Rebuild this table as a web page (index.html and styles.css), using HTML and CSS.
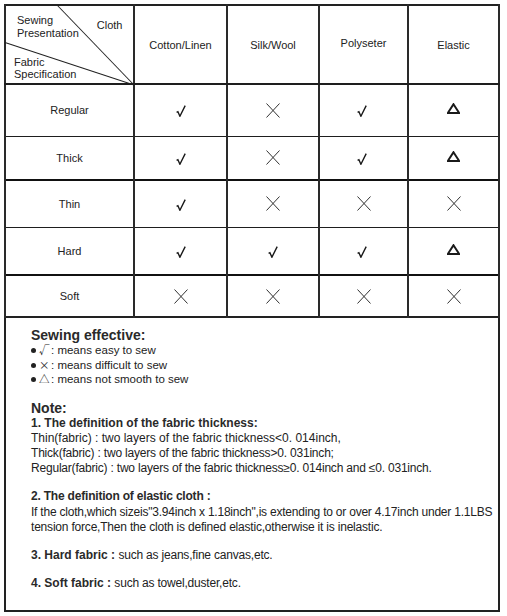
FILE: index.html
```html
<!DOCTYPE html>
<html lang="en">
<head>
<meta charset="utf-8">
<title>Sewing effective chart</title>
<link rel="stylesheet" href="styles.css">
</head>
<body>
<svg class="defs" width="0" height="0" aria-hidden="true">
  <symbol id="check" viewBox="0 0 10 12">
    <path d="M0.6 7.4 L1.9 6.7 L3.9 11.2 L9.2 0.6" fill="none" stroke="#1a1a1a" stroke-width="1.4" stroke-linejoin="miter"/>
  </symbol>
  <symbol id="cross" viewBox="0 0 14 15">
    <path d="M0.5 0.5 L13.5 14.5 M13.5 0.5 L0.5 14.5" fill="none" stroke="#333" stroke-width="1"/>
  </symbol>
  <symbol id="tri" viewBox="0 0 13 11">
    <path d="M6.5 1.2 L12.2 10 L0.8 10 Z" fill="none" stroke="#1a1a1a" stroke-width="2" stroke-linejoin="miter"/>
  </symbol>
</svg>

<div class="sheet">
  <table class="chart">
    <colgroup>
      <col class="c-spec"><col class="c-cotton"><col class="c-silk"><col class="c-poly"><col class="c-elastic">
    </colgroup>
    <thead>
      <tr class="head">
        <th class="corner">
          <div class="corner-box">
            <svg class="diag" viewBox="0 0 129 79" preserveAspectRatio="none" aria-hidden="true">
              <line x1="52" y1="0" x2="129" y2="79"/>
              <line x1="0" y1="37" x2="129" y2="79"/>
            </svg>
            <div class="corner-top">
              <span class="sew">Sewing<br>Presentation</span>
              <span class="cloth">Cloth</span>
            </div>
            <div class="fab">Fabric<br>Specification</div>
          </div>
        </th>
        <th>Cotton/Linen</th>
        <th>Silk/Wool</th>
        <th class="poly">Polyseter</th>
        <th>Elastic</th>
      </tr>
    </thead>
    <tbody>
      <tr class="r-regular">
        <th>Regular</th>
        <td><svg class="ic ck"><use href="#check"/></svg></td>
        <td><svg class="ic x"><use href="#cross"/></svg></td>
        <td class="poly"><svg class="ic ck"><use href="#check"/></svg></td>
        <td><svg class="ic tr"><use href="#tri"/></svg></td>
      </tr>
      <tr class="r-thick">
        <th>Thick</th>
        <td><svg class="ic ck"><use href="#check"/></svg></td>
        <td><svg class="ic x"><use href="#cross"/></svg></td>
        <td class="poly"><svg class="ic ck"><use href="#check"/></svg></td>
        <td><svg class="ic tr"><use href="#tri"/></svg></td>
      </tr>
      <tr class="r-thin heavy">
        <th>Thin</th>
        <td><svg class="ic ck"><use href="#check"/></svg></td>
        <td><svg class="ic x"><use href="#cross"/></svg></td>
        <td><svg class="ic x"><use href="#cross"/></svg></td>
        <td><svg class="ic x"><use href="#cross"/></svg></td>
      </tr>
      <tr class="r-hard">
        <th>Hard</th>
        <td><svg class="ic ck"><use href="#check"/></svg></td>
        <td><svg class="ic ck"><use href="#check"/></svg></td>
        <td class="poly"><svg class="ic ck"><use href="#check"/></svg></td>
        <td><svg class="ic tr"><use href="#tri"/></svg></td>
      </tr>
      <tr class="r-soft heavy">
        <th>Soft</th>
        <td><svg class="ic x"><use href="#cross"/></svg></td>
        <td><svg class="ic x"><use href="#cross"/></svg></td>
        <td><svg class="ic x"><use href="#cross"/></svg></td>
        <td><svg class="ic x"><use href="#cross"/></svg></td>
      </tr>
    </tbody>
  </table>

  <div class="notes">
    <h2 class="title">Sewing effective:</h2>
    <ul class="legend">
      <li><span class="dot"></span><span class="sym">√</span>: means easy to sew</li>
      <li><span class="dot"></span><span class="sym">×</span>: means difficult to sew</li>
      <li><span class="dot"></span><span class="sym">△</span>: means not smooth to sew</li>
    </ul>
    <h2 class="title note-title">Note:</h2>
    <p class="para"><b>1. The definition of the fabric thickness:</b><br>
      Thin(fabric) : two layers of the fabric thickness&lt;0. 014inch,<br>
      <span class="snug">Thick(fabric) : two layers of the fabric thickness&gt;0. 031inch;</span><br>
      <span class="snug">Regular(fabric) : two layers of the fabric thickness≥0. 014inch and ≤0. 031inch.</span></p>
    <p class="para gap"><b class="snug">2. The definition of elastic cloth :</b><br>
      <span class="tight">If the cloth,which sizeis"3.94inch x 1.18inch",is extending to or over 4.17inch under 1.1LBS</span><br>
      <span class="snug">tension force,Then the cloth is defined elastic,otherwise it is inelastic.</span></p>
    <p class="para gap"><b>3. Hard fabric :</b> <span class="snug">such as jeans,fine canvas,etc.</span></p>
    <p class="para gap"><b>4. Soft fabric :</b> <span class="snug">such as towel,duster,etc.</span></p>
  </div>
</div>
</body>
</html>
```

FILE: styles.css
```css
html, body {
  margin: 0;
  padding: 0;
  background: #fff;
}

body {
  font-family: "Liberation Sans", Arial, sans-serif;
  color: #222;
}

.defs {
  position: absolute;
  width: 0;
  height: 0;
  overflow: hidden;
}

.sheet {
  padding: 4px 0 0 4px;
  width: 496px;
}

/* ---------- table ---------- */
.chart {
  border-collapse: collapse;
  table-layout: fixed;
  width: 496px;
  border: 2px solid #222;
}

.c-spec { width: 129px; }
.c-cotton { width: 93px; }
.c-silk { width: 92px; }
.c-poly { width: 89px; }
.c-elastic { width: 91px; }

.chart th,
.chart td {
  padding: 0;
  text-align: center;
  vertical-align: middle;
  font-size: 11px;
  font-weight: normal;
  color: #222;
  border-left: 2px solid #2a2a2a;
  border-right: 2px solid #2a2a2a;
  border-top: 1px solid #1e1e1e;
  border-bottom: 1px solid #1e1e1e;
}

.head { height: 79px; }
.head th { border-bottom: 2px solid #1e1e1e; }
.r-regular { height: 52px; }
.r-thick { height: 44px; }
.r-thin { height: 47px; }
.r-hard { height: 48px; }
.r-soft { height: 42px; }

.chart tr.heavy th,
.chart tr.heavy td {
  border-top: 2px solid #111;
}

th.poly { padding-bottom: 3px; }
td.poly { padding-right: 4px; }

/* corner header */
.chart th.corner {
  vertical-align: top;
  text-align: left;
}

.corner-box {
  position: relative;
  height: 77px;
  line-height: 12.5px;
}

.diag {
  position: absolute;
  left: -1px;
  top: -1px;
  width: calc(100% + 2px);
  height: calc(100% + 3px);
  stroke: #222;
  stroke-width: 1;
  fill: none;
  overflow: visible;
}

.corner-top {
  display: flex;
  align-items: flex-start;
  gap: 18px;
  padding: 8px 0 0 11px;
}

.cloth {
  margin-top: 5px;
}

.fab {
  margin-top: 17px;
  padding-left: 8px;
  line-height: 12.4px;
}

/* icons */
.ic {
  display: inline-block;
  vertical-align: middle;
}

.ic.ck { width: 10px; height: 12px; margin-top: 2px; }
.ic.x { width: 14px; height: 15px; }
.ic.tr { width: 13px; height: 11px; margin-bottom: 3px; }

/* ---------- notes ---------- */
.notes {
  box-sizing: border-box;
  width: 496px;
  height: 294px;
  border: 2px solid #222;
  border-top: none;
  padding: 9px 0 0 25px;
}

.title {
  margin: 0;
  font-size: 14px;
  line-height: 16px;
  font-weight: bold;
  color: #2a2a2a;
}

.note-title {
  margin-top: 13px;
}

.legend {
  margin: 0;
  padding: 0;
  list-style: none;
  font-size: 11.5px;
  line-height: 14.5px;
}

.dot {
  display: inline-block;
  width: 5px;
  height: 5px;
  border-radius: 50%;
  background: #222;
  margin-right: 3px;
  vertical-align: 1px;
}

.sym {
  display: inline-block;
  width: 9px;
  margin-right: 3px;
  text-align: center;
  font-family: "Noto Sans CJK SC", "DejaVu Sans", sans-serif;
  font-size: 10.5px;
}

.para {
  margin: 0;
  font-size: 12px;
  line-height: 15.2px;
  color: #222;
  white-space: nowrap;
}

.para b {
  color: #2a2a2a;
}

.snug {
  letter-spacing: -0.2px;
}

.tight {
  letter-spacing: -0.22px;
}

.para.gap {
  margin-top: 13px;
}
```
